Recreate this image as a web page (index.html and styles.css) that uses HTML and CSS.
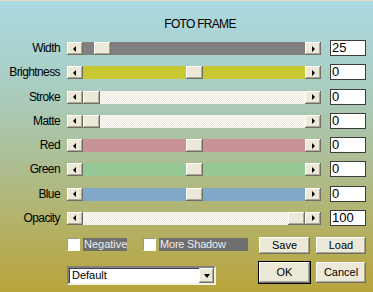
FILE: index.html
```html
<!DOCTYPE html>
<html>
<head>
<meta charset="utf-8">
<link rel="stylesheet" href="styles.css">
</head>
<body>
<div class="dlg">
  <div class="title">FOTO FRAME</div>
  <div class="rows">
    <div class="row"><span class="lbl">Width</span><div class="sb"><span class="btn"><i class="al"></i></span><div class="track t-gray"><span class="thumb" style="margin-left:11px"></span></div><span class="btn"><i class="ar"></i></span></div><div class="val">25</div></div>
    <div class="row"><span class="lbl">Brightness</span><div class="sb"><span class="btn"><i class="al"></i></span><div class="track t-yellow"><span class="thumb" style="margin-left:103px"></span></div><span class="btn"><i class="ar"></i></span></div><div class="val">0</div></div>
    <div class="row"><span class="lbl">Stroke</span><div class="sb"><span class="btn"><i class="al"></i></span><div class="track t-light"><span class="thumb" style="margin-left:0px"></span></div><span class="btn"><i class="ar"></i></span></div><div class="val">0</div></div>
    <div class="row"><span class="lbl">Matte</span><div class="sb"><span class="btn"><i class="al"></i></span><div class="track t-light"><span class="thumb" style="margin-left:0px"></span></div><span class="btn"><i class="ar"></i></span></div><div class="val">0</div></div>
    <div class="row"><span class="lbl">Red</span><div class="sb"><span class="btn"><i class="al"></i></span><div class="track t-red"><span class="thumb" style="margin-left:103px"></span></div><span class="btn"><i class="ar"></i></span></div><div class="val">0</div></div>
    <div class="row"><span class="lbl">Green</span><div class="sb"><span class="btn"><i class="al"></i></span><div class="track t-green"><span class="thumb" style="margin-left:103px"></span></div><span class="btn"><i class="ar"></i></span></div><div class="val">0</div></div>
    <div class="row"><span class="lbl">Blue</span><div class="sb"><span class="btn"><i class="al"></i></span><div class="track t-blue"><span class="thumb" style="margin-left:103px"></span></div><span class="btn"><i class="ar"></i></span></div><div class="val">0</div></div>
    <div class="row"><span class="lbl">Opacity</span><div class="sb"><span class="btn"><i class="al"></i></span><div class="track t-light"><span class="thumb" style="margin-left:205px"></span></div><span class="btn"><i class="ar"></i></span></div><div class="val">100</div></div>
  </div>
  <div class="bottom">
    <div class="checks">
      <span class="cb"></span><span class="cbl neg">Negative</span>
      <span class="cb cb2"></span><span class="cbl more">More Shadow</span>
    </div>
    <div class="pb">Save</div>
    <div class="pb">Load</div>
    <div class="combo"><span class="ctext">Default</span><span class="cbtn"><i class="ad"></i></span></div>
    <div class="pb big ok">OK</div>
    <div class="pb big cancel">Cancel</div>
  </div>
</div>
</body>
</html>
```

FILE: styles.css
```css
html, body {
  margin: 0;
  padding: 0;
}
body {
  width: 373px;
  height: 292px;
  overflow: hidden;
  font-family: "Liberation Sans", Arial, sans-serif;
  font-size: 11px;
  color: #000;
}
.dlg {
  box-sizing: border-box;
  width: 373px;
  height: 292px;
  border-top: 1px solid #e4dcbe;
  background: linear-gradient(to bottom, #abd9e3 0%, #a9cdc0 30%, #adbe94 55%, #b3b26a 76%, #b9a43a 100%);
  display: flex;
  flex-direction: column;
}
.title {
  margin-top: 16px;
  height: 14px;
  line-height: 14px;
  font-size: 12px;
  letter-spacing: -0.7px;
  text-align: center;
  padding-left: 27px;
}
.rows {
  margin-top: 9px;
  display: flex;
  flex-direction: column;
  gap: 8.29px;
}
.row {
  display: flex;
  height: 16px;
}
.lbl {
  width: 60px;
  margin-right: 7px;
  text-align: right;
  line-height: 16px;
  font-size: 12px;
  letter-spacing: -0.6px;
  white-space: nowrap;
}
.sb {
  width: 254px;
  height: 13px;
  margin-top: 2px;
  margin-right: 9px;
  display: flex;
}
.btn, .thumb {
  flex: none;
  height: 13px;
  background: #ece9d8;
  box-shadow: inset -1px -1px #716f64, inset 1px 1px #fff, inset -2px -2px #aca899;
  display: flex;
  align-items: center;
  justify-content: center;
}
.btn {
  width: 16px;
}
.thumb {
  width: 17px;
}
.al {
  width: 0;
  height: 0;
  border-top: 3px solid transparent;
  border-bottom: 3px solid transparent;
  border-right: 3px solid #000;
  margin-left: -1px;
}
.ar {
  width: 0;
  height: 0;
  border-top: 3px solid transparent;
  border-bottom: 3px solid transparent;
  border-left: 3px solid #000;
  margin-left: 1px;
}
.track {
  flex: 1;
  display: flex;
  height: 13px;
}
.t-gray { background: #808080; }
.t-yellow { background: #c8c832; }
.t-red { background: #c89298; }
.t-green { background: #96c896; }
.t-blue { background: #80a8c8; }
.t-light {
  background: repeating-conic-gradient(#eceae0 0 25%, #fbfaf4 0 50%) 0 0 / 2px 2px;
}
.val {
  box-sizing: border-box;
  width: 36px;
  height: 16px;
  border: 1px solid #3c3c3c;
  background: #fff;
  font-size: 13px;
  line-height: 14px;
  padding-left: 1px;
}
.bottom {
  margin-top: 11px;
  margin-left: 67px;
  display: grid;
  grid-template-columns: 186px 51px 50px;
  grid-template-rows: 17px 23px;
  column-gap: 6px;
  row-gap: 7px;
}
.checks {
  display: flex;
  align-items: flex-start;
  padding-top: 1px;
}
.cb {
  box-sizing: border-box;
  width: 13px;
  height: 13px;
  background: #fff;
  border: 1px solid;
  border-color: #9a9888 #fff #fff #9a9888;
}
.cb2 {
  margin-left: 16px;
}
.cbl {
  height: 13px;
  line-height: 13px;
  background: #6e6e6e;
  color: #ececec;
  margin-left: 3px;
  padding-left: 1px;
  box-sizing: border-box;
  white-space: nowrap;
}
.neg { width: 44px; }
.more { width: 89px; letter-spacing: -0.2px; }
.pb {
  box-sizing: border-box;
  height: 17px;
  background: #ece9d8;
  box-shadow: inset -1px -1px #716f64, inset 1px 1px #fff, inset -2px -2px #aca899;
  text-align: center;
  line-height: 17px;
}
.pb.big {
  height: 21px;
  line-height: 21px;
}
.ok {
  height: 23px !important;
  line-height: 21px !important;
  border: 1px solid #000;
  margin-left: -1px;
  width: 53px;
}
.cancel {
  margin-top: 1px;
}
.combo {
  box-sizing: border-box;
  width: 149px;
  height: 19px;
  margin-top: 5px;
  background: #fff;
  border: 2px solid;
  border-color: #808080 #f4f2e8 #f4f2e8 #808080;
  box-shadow: inset 1px 1px #404040;
  display: flex;
  align-items: center;
}
.ctext {
  flex: 1;
  padding-left: 3px;
  line-height: 15px;
}
.cbtn {
  width: 15px;
  height: 15px;
  background: #ece9d8;
  box-shadow: inset -1px -1px #716f64, inset 1px 1px #fff, inset -2px -2px #aca899;
  display: flex;
  align-items: center;
  justify-content: center;
}
.ad {
  width: 0;
  height: 0;
  border-left: 3.5px solid transparent;
  border-right: 3.5px solid transparent;
  border-top: 4px solid #000;
  margin-top: 1px;
}
```
